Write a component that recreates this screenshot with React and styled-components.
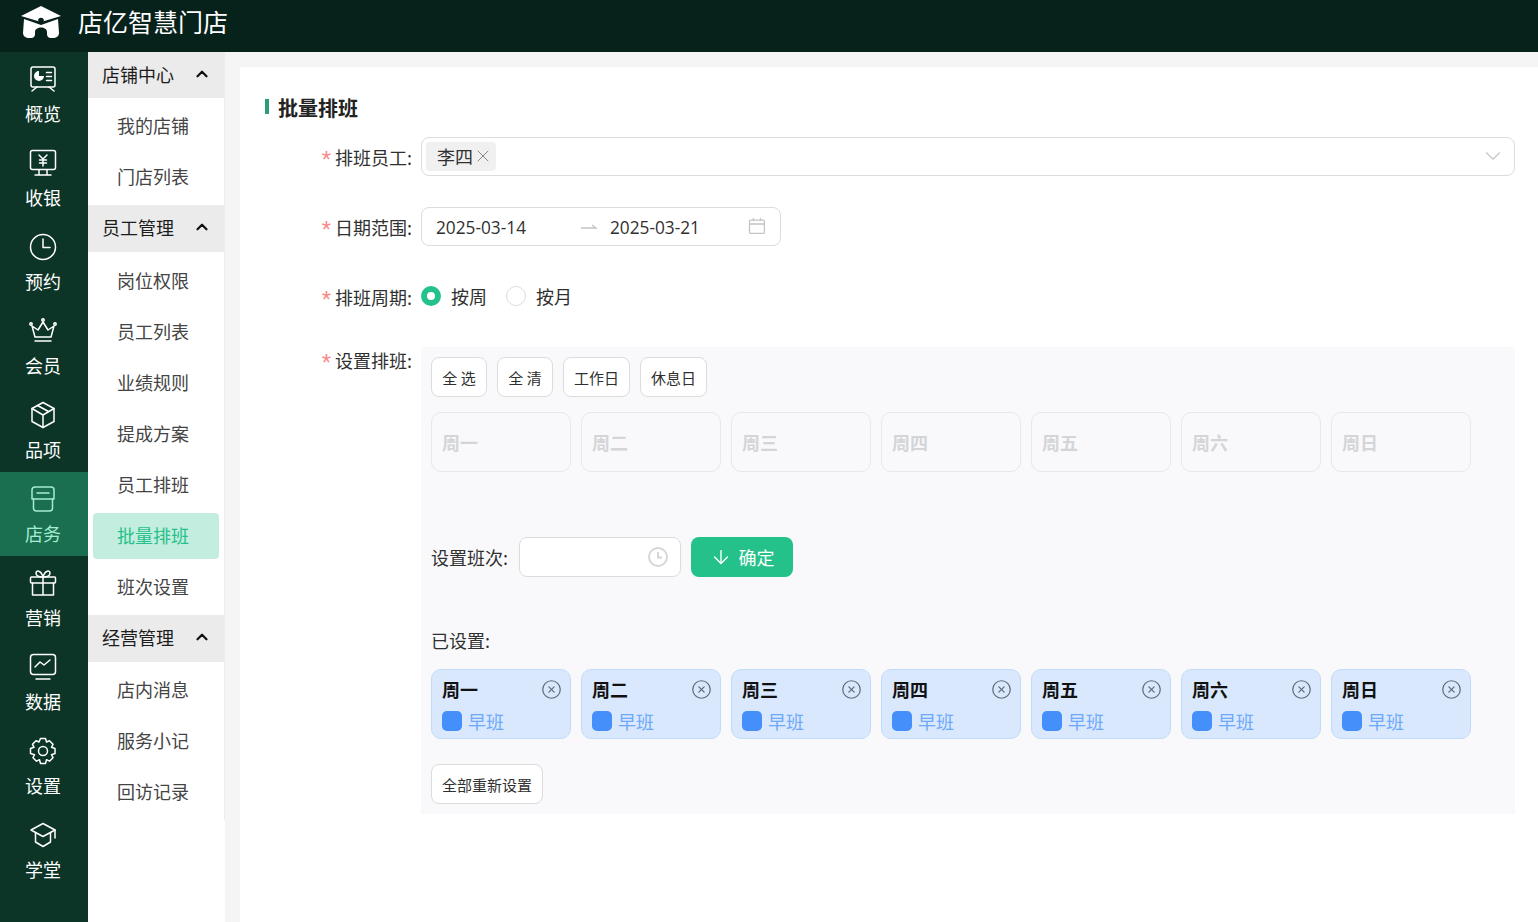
import React from "react";
import styled, { createGlobalStyle } from "styled-components";
import { ChevronUp, ChevronDown, X, ArrowDown, CircleX } from "lucide-react";

const GlobalStyle = createGlobalStyle`
  html, body {
    margin: 0;
    padding: 0;
    height: 100%;
    overflow: hidden;
  }
  body {
    font-family: "Noto Sans CJK SC", "Noto Sans", sans-serif;
    color: #222;
    background: #f5f5f5;
  }
  * { box-sizing: border-box; }
`;

const Page = styled.div`
  width: 1538px;
  height: 922px;
  display: flex;
  flex-direction: column;
  overflow: hidden;
`;

const Header = styled.header`
  height: 52px;
  flex: none;
  background: #07211b;
  display: flex;
  align-items: center;
  padding-left: 21px;
  gap: 17px;
`;

const HeaderTitle = styled.div`
  color: #fff;
  font-size: 25px;
  line-height: 44px;
  margin-top: -10px;
`;

const Body = styled.div`
  flex: 1;
  display: flex;
  min-height: 0;
`;

const Rail = styled.nav`
  width: 88px;
  flex: none;
  background: #0d3527;
`;

const RailItem = styled.div`
  height: 84px;
  display: flex;
  flex-direction: column;
  align-items: center;
  padding-top: 12px;
  padding-right: 2px;
  color: ${(p) => (p.$active ? "#a5ecd2" : "#fff")};
  background: ${(p) => (p.$active ? "#1a6f50" : "transparent")};
  svg { display: block; }
`;

const RailLabel = styled.span`
  font-size: 18px;
  line-height: 26px;
  margin-top: 6px;
`;

const SideWrap = styled.div`
  width: 137px;
  flex: none;
  background: #fff;
`;

const SideMenu = styled.aside`
  height: 768px;
  border-right: 1px solid #ececec;
`;

const GroupHead = styled.div`
  height: ${(p) => (p.$first ? "46px" : "47px")};
  background: #ebebeb;
  display: flex;
  align-items: center;
  justify-content: space-between;
  padding: 0 13px ${(p) => (p.$first ? 2 : 3)}px 14px;
  font-size: 18px;
  color: #1c1c1c;
`;

const GroupList = styled.div`
  padding: ${(p) => p.$top}px 5px 0;
`;

const SubItem = styled.div`
  height: 46px;
  margin-bottom: 5px;
  border-radius: 4px;
  display: flex;
  align-items: center;
  padding: 0 0 2px 24px;
  font-size: 18px;
  color: ${(p) => (p.$active ? "#26c08a" : "#444")};
  background: ${(p) => (p.$active ? "#c3eedf" : "transparent")};
`;

const Main = styled.main`
  flex: 1;
  padding: 15px 0 0 15px;
  min-width: 0;
`;

const Card = styled.section`
  height: 100%;
  background: #fff;
  padding: 27px 23px 0 25px;
`;

const Title = styled.h2`
  margin: 0 0 15px;
  display: flex;
  align-items: center;
  gap: 9px;
  height: 27px;
  font-size: 20px;
  font-weight: 700;
  color: #222;
  &::before {
    content: "";
    width: 4px;
    height: 15px;
    margin-top: -2px;
    background: #2a9d78;
  }
`;

const FormRow = styled.div`
  display: flex;
  align-items: ${(p) => (p.$top ? "flex-start" : "center")};
  min-height: 40px;
  margin-bottom: ${(p) => p.$gap}px;
`;

const Label = styled.label`
  width: 156px;
  flex: none;
  padding-right: 9px;
  margin-top: ${(p) => (p.$top ? -1 : 2)}px;
  font-size: 18px;
  line-height: 28px;
  color: #303030;
  display: flex;
  justify-content: flex-end;
  align-items: center;
  white-space: nowrap;
`;

const Star = styled.i`
  color: #f78989;
  font-style: normal;
  font-family: "Liberation Sans", sans-serif;
  margin-right: 4px;
  font-size: 24px;
  line-height: 20px;
  padding-top: 6px;
`;

const Field = styled.div`
  flex: ${(p) => (p.$grow ? 1 : "none")};
  width: ${(p) => p.$w || "auto"};
  height: 39px;
  border: 1px solid #dcdcdc;
  border-radius: 8px;
  background: #fff;
  display: flex;
  align-items: center;
  justify-content: space-between;
  color: #c4c4c4;
`;

const Tag = styled.span`
  margin-left: 4px;
  height: 29px;
  padding: 0 3px 0 11px;
  border-radius: 4px;
  background: #f0f0f0;
  display: flex;
  align-items: center;
  font-size: 18px;
  color: #303030;
`;

const DateBox = styled(Field)`
  padding: 0 14px;
  justify-content: flex-start;
`;

const DateText = styled.span`
  width: ${(p) => p.$w}px;
  padding-top: 2px;
  font-size: 17.25px;
  color: #303030;
  font-family: "Open Sans", "Noto Sans", sans-serif;
`;

const Radio = styled.label`
  display: flex;
  align-items: center;
  gap: 10px;
  margin-right: 19px;
  font-size: 18px;
  color: #303030;
`;

const RadioDot = styled.span`
  width: 20px;
  height: 20px;
  border-radius: 50%;
  background: #fff;
  border: ${(p) => (p.$on ? "6px solid #24c28a" : "1px solid #dcdcdc")};
`;

const Panel = styled.div`
  flex: 1;
  height: 467px;
  padding: 10px;
  background: #f9f9fb;
`;

const BtnRow = styled.div`
  display: flex;
  gap: 10px;
`;

const PlainBtn = styled.button`
  height: 40px;
  min-width: 56px;
  padding: 0 10px;
  border: 1px solid #dcdcdc;
  border-radius: 8px;
  background: #fff;
  color: #303030;
  font: inherit;
  font-size: 15px;
  white-space: pre;
`;

const DayGrid = styled.div`
  display: flex;
  gap: 10px;
  margin-top: ${(p) => p.$mt}px;
`;

const DayTile = styled.div`
  width: 140px;
  height: 60px;
  padding: 0 10px;
  border: 1px solid #e8e8ea;
  border-radius: 10px;
  display: flex;
  align-items: center;
  font-size: 18px;
  font-weight: 700;
  color: #d4d5d8;
`;

const ShiftRow = styled.div`
  margin-top: 65px;
  display: flex;
  align-items: center;
  gap: 10px;
  font-size: 18px;
  color: #303030;
`;

const ShiftInput = styled.div`
  width: 162px;
  height: 40px;
  margin-left: 1px;
  padding-right: 11px;
  border: 1px solid #dcdcdc;
  border-radius: 8px;
  background: #fff;
  display: flex;
  align-items: center;
  justify-content: flex-end;
  color: #d6d6d6;
`;

const ConfirmBtn = styled.button`
  width: 102px;
  height: 40px;
  border: none;
  border-radius: 8px;
  background: #24c28a;
  color: #fff;
  font: inherit;
  font-size: 18px;
  display: flex;
  align-items: center;
  justify-content: center;
  gap: 7px;
`;

const DoneLabel = styled.div`
  margin-top: 49px;
  margin-bottom: 15px;
  font-size: 18px;
  line-height: 28px;
  color: #303030;
`;

const SetCard = styled.div`
  width: 140px;
  height: 70px;
  padding: 6px 10px 0;
  background: #d9e8fd;
  border: 1px solid #bfdcf9;
  border-radius: 10px;
`;

const SetHead = styled.div`
  display: flex;
  align-items: center;
  justify-content: space-between;
  height: 26px;
  font-size: 18px;
  font-weight: 700;
  color: #111;
  svg { color: #5f6b7a; margin-right: -2px; }
`;

const SetShift = styled.div`
  margin-top: 6px;
  display: flex;
  align-items: center;
  gap: 6px;
  font-size: 18px;
  line-height: 26px;
  color: #6ea8fb;
`;

const Swatch = styled.span`
  width: 20px;
  height: 20px;
  border-radius: 5px;
  background: #448ffa;
`;

const ResetWrap = styled.div`
  margin-top: 25px;
`;

const Logo = () => (
  <svg width="40" height="33" viewBox="0 0 40 33" style={{ marginTop: -7 }}>
    <path fill="#fff" d="M20 0 40 10 20 16 0 10Z" />
    <path fill="#fff" d="M3 13 20 19 37 13 38 27a5 5 0 0 1-5 5H30c-3 0-4-2-4-4V26c0-6-12-6-12 0v2c0 2-1 4-4 4H7a5 5 0 0 1-5-5Z" />
    <circle cx="20" cy="14.500" r="2.800" fill="#07211b" />
  </svg>
);

const Ico = ({ children }) => (
  <svg width="30" height="30" viewBox="0 0 30 30" fill="none" stroke="currentColor" strokeWidth="1.5" strokeLinecap="round" strokeLinejoin="round">
    {children}
  </svg>
);

const railItems = [
  ["概览", <><rect x="3" y="3" width="24" height="20" rx="2" /><path fill="currentColor" stroke="none" d="M11 7a5 5 0 1 0 5 5h-5Z" /><path d="M18.500 8.500h5M18.500 12.500h5M18.500 16.500h5M9 23l-5 4M21 23l5 4" /></>],
  ["收银", <><rect x="2.500" y="2.500" width="25" height="19" rx="2" /><path d="M11 7l4 4 4-4M15 11v7M11.500 12h7M11.500 15h7M11 22v4.500M19 22v4.500M7 27h16" /></>],
  ["预约", <><circle cx="15" cy="15" r="12.500" /><path d="M15 7v8.500h7" /></>],
  ["会员", <><path d="M7 21 4 10 10 14 15 6 20 14 26 10 23 21Z" /><circle cx="15" cy="4" r="1.200" /><circle cx="3" cy="8" r="1.200" /><circle cx="27" cy="8" r="1.200" /><path d="M7 25h16" /></>],
  ["品项", <><path d="M15 2.500 26 8.500V21.500L15 27.500 4 21.500V8.500Z" /><path d="M4 8.500 15 15 26 8.500M15 15V27.500M9.500 5.500 20.500 11.500" /></>],
  ["店务", <><path d="M7 3h16a3 3 0 0 1 3 3v9H4V6a3 3 0 0 1 3-3Z" /><path d="M5.500 15v9a3 3 0 0 0 3 3h13a3 3 0 0 0 3-3v-9" /><path d="M9 9h12" /></>],
  ["营销", <><rect x="2.500" y="9" width="25" height="6" rx="1" /><path d="M4.500 15v12h21V15M15 9v18M15 9c-3 0-7-1-7-4 0-3 5-3 7 4ZM15 9c3 0 7-1 7-4 0-3-5-3-7 4Z" /></>],
  ["数据", <><rect x="2.500" y="2.500" width="25" height="20" rx="3" /><path d="M7 15l5-5 4 3 6-5M8 27h14" /></>],
  ["设置", <><circle cx="15" cy="15" r="4.500" /><path d="M12.500 2.500h5l1 3.500 3-1.200 3.500 3.500-1.500 3 3.500 1.200v5l-3.500 1.200 1.500 3-3.500 3.500-3-1.500-1 3.800h-5l-1-3.800-3 1.500-3.500-3.500 1.500-3L2.500 17.500v-5L6 11.300l-1.500-3L8 4.800l3 1.200Z" /></>],
  ["学堂", <><path d="M15 3.500 27 10 15 16.500 3 10Z" /><path d="M7.500 13v9L15 26.500 22.500 22v-9M27 10v8" /></>],
];

const menu = [
  ["店铺中心", 5, ["我的店铺", "门店列表"]],
  ["员工管理", 6, ["岗位权限", "员工列表", "业绩规则", "提成方案", "员工排班", "批量排班", "班次设置"]],
  ["经营管理", 5, ["店内消息", "服务小记", "回访记录"]],
];

const days = ["周一", "周二", "周三", "周四", "周五", "周六", "周日"];

export default function App() {
  return (
    <Page>
      <GlobalStyle />
      <Header>
        <Logo />
        <HeaderTitle>店亿智慧门店</HeaderTitle>
      </Header>
      <Body>
        <Rail>
          {railItems.map(([label, icon]) => (
            <RailItem key={label} $active={label === "店务"}>
              <Ico>{icon}</Ico>
              <RailLabel>{label}</RailLabel>
            </RailItem>
          ))}
        </Rail>
        <SideWrap>
          <SideMenu>
            {menu.map(([head, top, items], i) => (
              <div key={head}>
                <GroupHead $first={i === 0}>
                  {head}
                  <ChevronUp size={18} strokeWidth={3} color="#111" />
                </GroupHead>
                <GroupList $top={top}>
                  {items.map((item) => (
                    <SubItem key={item} $active={item === "批量排班"}>{item}</SubItem>
                  ))}
                </GroupList>
              </div>
            ))}
          </SideMenu>
        </SideWrap>
        <Main>
          <Card>
            <Title>批量排班</Title>
            <FormRow $gap={30}>
              <Label><Star>*</Star>排班员工:</Label>
              <Field $grow>
                <Tag>李四<X size={20} strokeWidth={1.2} color="#888" /></Tag>
                <ChevronDown size={26} strokeWidth={1} style={{ marginRight: 8 }} />
              </Field>
            </FormRow>
            <FormRow $gap={30}>
              <Label><Star>*</Star>日期范围:</Label>
              <DateBox $w="360px">
                <DateText $w={146}>2025-03-14</DateText>
                <svg width="29" height="12" viewBox="0 0 29 12" fill="none" stroke="#c4c4c4" strokeWidth="1.400">
                  <path d="M0 8h15l-4-3" />
                </svg>
                <DateText $w={139}>2025-03-21</DateText>
                <svg width="18" height="18" viewBox="0 0 18 18" fill="none" stroke="#c4c4c4" strokeWidth="1.300">
                  <rect x="1.500" y="3" width="15" height="13.500" rx="1" />
                  <path d="M1.500 7h15M5.500 1v3M12.500 1v3" />
                </svg>
              </DateBox>
            </FormRow>
            <FormRow $gap={31}>
              <Label><Star>*</Star>排班周期:</Label>
              <Radio><RadioDot $on />按周</Radio>
              <Radio><RadioDot />按月</Radio>
            </FormRow>
            <FormRow $top $gap={0}>
              <Label $top><Star>*</Star>设置排班:</Label>
              <Panel>
                <BtnRow>
                  <PlainBtn>全 选</PlainBtn>
                  <PlainBtn>全 清</PlainBtn>
                  <PlainBtn>工作日</PlainBtn>
                  <PlainBtn>休息日</PlainBtn>
                </BtnRow>
                <DayGrid $mt={15}>
                  {days.map((d) => <DayTile key={d}>{d}</DayTile>)}
                </DayGrid>
                <ShiftRow>
                  设置班次:
                  <ShiftInput>
                    <svg width="22" height="22" viewBox="0 0 22 22" fill="none" stroke="currentColor" strokeWidth="2">
                      <circle cx="11" cy="11" r="9" />
                      <path d="M11 6v5.500h4" />
                    </svg>
                  </ShiftInput>
                  <ConfirmBtn><ArrowDown size={22} strokeWidth={1.5} />确定</ConfirmBtn>
                </ShiftRow>
                <DoneLabel>已设置:</DoneLabel>
                <DayGrid $mt={0}>
                  {days.map((d) => (
                    <SetCard key={d}>
                      <SetHead>{d}<CircleX size={21} strokeWidth={1.4} /></SetHead>
                      <SetShift><Swatch />早班</SetShift>
                    </SetCard>
                  ))}
                </DayGrid>
                <ResetWrap>
                  <PlainBtn>全部重新设置</PlainBtn>
                </ResetWrap>
              </Panel>
            </FormRow>
          </Card>
        </Main>
      </Body>
    </Page>
  );
}
